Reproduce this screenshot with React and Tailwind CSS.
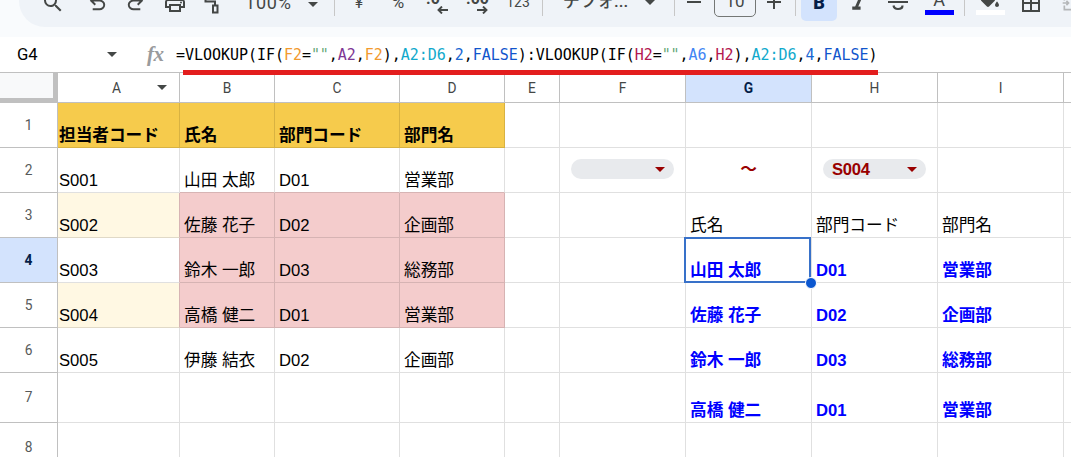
import clsx from "clsx";
import {
  MdSearch,
  MdOutlinePrint,
  MdFormatItalic,
  MdFormatColorFill,
} from "react-icons/md";

const columns = [
  { name: "A", width: "w-[122px]" },
  { name: "B", width: "w-[95px]" },
  { name: "C", width: "w-[125px]" },
  { name: "D", width: "w-[105px]" },
  { name: "E", width: "w-[55px]" },
  { name: "F", width: "w-[126px]" },
  { name: "G", width: "w-[126px]" },
  { name: "H", width: "w-[126px]" },
  { name: "I", width: "w-[126px]" },
  { name: "", width: "w-[126px]" },
];

const rows = [
  { id: 1, height: "h-[45px]", cells: { A: "担当者コード", B: "氏名", C: "部門コード", D: "部門名" } },
  { id: 2, height: "h-[45px]", cells: { A: "S001", B: "山田 太郎", C: "D01", D: "営業部" } },
  {
    id: 3,
    height: "h-[45px]",
    cells: { A: "S002", B: "佐藤 花子", C: "D02", D: "企画部", G: "氏名", H: "部門コード", I: "部門名" },
  },
  {
    id: 4,
    height: "h-[45px]",
    cells: { A: "S003", B: "鈴木 一郎", C: "D03", D: "総務部", G: "山田 太郎", H: "D01", I: "営業部" },
  },
  {
    id: 5,
    height: "h-[45px]",
    cells: { A: "S004", B: "高橋 健二", C: "D01", D: "営業部", G: "佐藤 花子", H: "D02", I: "企画部" },
  },
  {
    id: 6,
    height: "h-[45px]",
    cells: { A: "S005", B: "伊藤 結衣", C: "D02", D: "企画部", G: "鈴木 一郎", H: "D03", I: "総務部" },
  },
  { id: 7, height: "h-[50px]", cells: { G: "高橋 健二", H: "D01", I: "営業部" } },
  { id: 8, height: "h-[50px]", cells: {} },
];

const formula = [
  ["=VLOOKUP(IF(", "text-black"],
  ["F2", "text-[#f29a2e]"],
  ["=", "text-black"],
  ['""', "text-[#188038]/70"],
  [",", "text-black"],
  ["A2", "text-[#7e3794]"],
  [",", "text-black"],
  ["F2", "text-[#f29a2e]"],
  ["),", "text-black"],
  ["A2:D6", "text-[#11a9cc]"],
  [",", "text-black"],
  ["2", "text-[#1967d2]"],
  [",", "text-black"],
  ["FALSE", "text-[#1155cc]"],
  ["):VLOOKUP(IF(", "text-black"],
  ["H2", "text-[#b3174f]"],
  ["=", "text-black"],
  ['""', "text-[#188038]/70"],
  [",", "text-black"],
  ["A6", "text-[#4285f4]"],
  [",", "text-black"],
  ["H2", "text-[#b3174f]"],
  ["),", "text-black"],
  ["A2:D6", "text-[#11a9cc]"],
  [",", "text-black"],
  ["4", "text-[#1967d2]"],
  [",", "text-black"],
  ["FALSE", "text-[#1155cc]"],
  [")", "text-black"],
];

const Caret = ({ className }) => (
  <svg viewBox="0 0 10 5" className={clsx("h-[5px] w-[10px] shrink-0", className)}>
    <path d="M0 0h10L5 5z" fill="currentColor" />
  </svg>
);

const Divider = ({ className }) => <div className={clsx("h-[25px] w-px shrink-0 bg-[#c7c7c7]", className)} />;

const Tool = ({ className, children }) => (
  <div className={clsx("flex h-[36px] w-[36px] shrink-0 items-center justify-center rounded-[5px]", className)}>
    {children}
  </div>
);

const UndoIcon = ({ className }) => (
  <svg viewBox="0 -960 960 960" fill="currentColor" className={clsx("size-[23px]", className)}>
    <path d="M280-200v-80h284q63 0 109.5-40T720-420q0-60-46.5-100T564-560H312l104 104-56 56-200-200 200-200 56 56-104 104h252q97 0 169.5 63T800-420q0 94-72.5 157T564-200H280Z" />
  </svg>
);

const PaintIcon = () => (
  <svg viewBox="0 0 24 24" fill="none" stroke="currentColor" strokeWidth="2" className="size-[24px]">
    <path d="M6 2h11v5H6zM6 4.500H4.500V10.500H14V14" />
    <path d="M12 14.500h4.500v7H12z" />
  </svg>
);

const StrikeIcon = () => (
  <svg viewBox="0 0 24 24" fill="none" stroke="currentColor" strokeWidth="2.200" className="mb-[2px] size-[24px]">
    <path d="M2 12h20M16.500 8C16 5.500 14.500 4.500 12 4.500S7.500 6 7.500 8.500M7.500 15.500c.5 2.500 2 3.500 4.500 3.500s4.500-1.200 4.500-3.500" />
  </svg>
);

const BordersIcon = () => (
  <svg viewBox="0 0 18 18" fill="none" stroke="currentColor" strokeWidth="2" className="size-[18px]">
    <path d="M1 1h16v16H1zM9 1v16M1 9h16" />
  </svg>
);

// Decimal place buttons: digits with an arrow tucked below them
const DecimalIcon = ({ digits, right }) => (
  <div className="relative mb-[4px] h-[26px] w-[22px] text-[16px] leading-[18px] font-bold">
    <span className="absolute top-[2px] left-0">{digits}</span>
    <svg
      viewBox="0 0 11 8"
      fill="none"
      stroke="currentColor"
      strokeWidth="1.9"
      className={clsx("absolute right-0 bottom-0 h-[8px] w-[11px]", right && "rotate-180")}
    >
      <path d="M11 4H1.500M5 .5 1.500 4 5 7.500" />
    </svg>
  </div>
);

const Toolbar = () => (
  <div className="flex h-[37px] flex-col bg-[#f9fbfd] pl-[19px]">
    <div className="flex h-[27px] flex-col justify-end overflow-hidden rounded-bl-[26px] bg-[#eff3f8]">
      <div className="flex h-[48px] shrink-0 items-center pl-[16px] font-['Roboto','Noto_Sans_CJK_JP',sans-serif] text-[#444746]">
        <Tool><MdSearch className="size-[24px]" /></Tool>
        <Tool className="ml-[8px]"><UndoIcon /></Tool>
        <Tool className="ml-[2px]"><UndoIcon className="-scale-x-100" /></Tool>
        <Tool className="ml-[4px]"><MdOutlinePrint className="size-[24px]" /></Tool>
        <Tool className="ml-[2px]"><PaintIcon /></Tool>
        <div className="-mt-[2px] ml-[14px] w-[48px] shrink-0 text-[18px] tracking-[0.8px]">100%</div>
        <Caret className="mt-[2px] ml-[15px]" />
        <Divider className="ml-[16px]" />
        <Tool className="ml-[6px] text-[16px]">¥</Tool>
        <Tool className="ml-[3px] text-[17px]">%</Tool>
        <Tool className="ml-[3px]"><DecimalIcon digits=".0" /></Tool>
        <Tool className="ml-[4px]"><DecimalIcon digits=".00" right /></Tool>
        <Tool className="-mt-[2px] ml-[5px] text-[14px]">123</Tool>
        <Divider className="ml-[6px]" />
        <div className="-mt-[2px] ml-[20px] w-[66px] shrink-0 text-[17px] font-medium whitespace-nowrap">デフォ...</div>
        <Caret className="-mt-[1px] ml-[16px]" />
        <Divider className="ml-[19px]" />
        <div className="-mt-[3px] mr-[3px] ml-[12px] h-[2px] w-[14px] shrink-0 bg-current" />
        <div className="-mt-[3px] ml-[10px] flex h-[30px] w-[42px] shrink-0 items-center justify-center rounded-[5px] border border-[#747775] text-[17px]">
          10
        </div>
        <div className="-mt-[3px] mr-[3px] ml-[11px] flex h-[14px] w-[14px] shrink-0 items-center">
          <svg viewBox="0 0 14 14" stroke="currentColor" strokeWidth="2" className="size-[14px]">
            <path d="M7 0v14M0 7h14" />
          </svg>
        </div>
        <Divider className="ml-[11px]" />
        <Tool className="ml-[5px] bg-[#d3e3fd] pb-[2px] text-[18px] font-black text-[#041e49]">B</Tool>
        <Tool className="ml-[3px]"><MdFormatItalic className="size-[25px]" /></Tool>
        <Tool className="ml-[4px]"><StrikeIcon /></Tool>
        <Tool className="ml-[5px] flex-col pb-[2px]">
          <span className="text-[18px] leading-[20px]">A</span>
          <span className="h-[5px] w-[29px] bg-[#0000ff]" />
        </Tool>
        <Divider className="ml-[7px]" />
        <Tool className="ml-[7px] flex-col pb-[2px]">
          <MdFormatColorFill className="-mb-[4px] size-[24px]" />
          <span className="h-[5px] w-[29px] bg-white" />
        </Tool>
        <Tool className="ml-[5px] pb-px"><BordersIcon /></Tool>
        <Tool className="ml-[4px] text-[#b4b6b8]">
          <svg viewBox="0 0 24 24" fill="none" stroke="currentColor" strokeWidth="2" className="size-[20px]">
            <path d="M4 9V4h16v5M4 15v5h16v-5M2 12h7M6.500 9.500 9 12l-2.500 2.500M22 12h-7" />
          </svg>
        </Tool>
      </div>
    </div>
  </div>
);

const FormulaBar = () => (
  <div className="relative flex h-[36px] items-center border-b border-[#c0c0c0] bg-white">
    <div className="w-[107px] pl-[17px] font-['Roboto',sans-serif] text-[16.67px] text-black">G4</div>
    <Caret className="text-[#444746]" />
    <div className="ml-[30px] w-[29px] pb-[2px] font-['Liberation_Serif',serif] text-[21px] leading-[22px] font-bold tracking-[-0.5px] text-[#999b9d] italic">
      fx
    </div>
    <div className="pt-[2px] font-['DejaVu_Sans_Mono',monospace] text-[15px] tracking-[-0.04px] whitespace-pre">
      {formula.map(([text, color], i) => (
        <span key={i} className={color}>{text}</span>
      ))}
    </div>
    {/* marker line under the formula */}
    <div className="absolute top-[33px] left-[183px] z-10 h-[5px] w-[695px] bg-[#e31e1e]" />
  </div>
);

const Chip = ({ value }) => (
  <div className="ml-[11px] flex h-[20px] w-[103px] items-center justify-between rounded-full bg-[#e8eaed] pr-[9px] pl-[9px] font-bold tracking-[-0.3px] text-[#990000]">
    <span className="pt-[2px]">{value}</span>
    <Caret />
  </div>
);

const cellStyle = (col, row) => {
  const inTable = ["A", "B", "C", "D"].includes(col);
  const inRange = ["B", "C", "D"].includes(col);
  const isResult = ["G", "H", "I"].includes(col) && row >= 4;
  return clsx(
    col === "A" ? "pl-px" : "pl-[4px]",
    inTable && row === 1 && "bg-[#f6cb4c] font-bold",
    inRange && row >= 3 && row <= 5 && "bg-[#f4cccc]",
    inRange && row === 2 && "border-b-[#d7b4b4]",
    col === "A" && row >= 3 && row <= 5 && "border-r-[#d7b4b4]",
    col === "A" && (row === 3 || row === 5) && "bg-[#fff8e3]",
    isResult ? "font-bold text-[#0000ff]" : "text-black"
  );
};

const Cell = ({ column, row }) => {
  const col = column.name;
  const base = clsx("flex shrink-0 border-r border-b border-black/12 whitespace-nowrap", column.width);

  if (row.id === 2 && (col === "F" || col === "H")) {
    return (
      <div className={clsx(base, "items-center pb-[2px]")}>
        <Chip value={col === "H" ? "S004" : ""} />
      </div>
    );
  }
  if (row.id === 2 && col === "G") {
    return <div className={clsx(base, "items-center justify-center font-bold text-[#990000]")}>～</div>;
  }
  return (
    <div className={clsx(base, "relative items-end pb-px", cellStyle(col, row.id))}>
      {row.cells[col]}
      {row.id === 4 && col === "G" && (
        <>
          <div className="absolute -top-px -left-[2px] z-10 h-[46px] w-[127px] border-2 border-[#3871c9]" />
          <div className="absolute top-[39px] left-[119px] z-20 size-[12px] rounded-full border border-white bg-[#0b57d0]" />
        </>
      )}
    </div>
  );
};

const Sheet = () => (
  <div className="flex flex-col font-['Liberation_Sans','Noto_Sans_CJK_JP',sans-serif] text-[16.67px] leading-[20px]">
    <div className="flex h-[30px] shrink-0 font-['Roboto',sans-serif] text-[13.75px] text-[#444746]">
      <div className="w-[58px] shrink-0 border-r-[5px] border-b-[5px] border-[#c0c0c0] bg-[#f8f9fa]" />
      {columns.map((column) => (
        <div
          key={column.name}
          className={clsx(
            "flex shrink-0 items-center border-r border-b border-[#c0c0c0]",
            column.width,
            column.name === "A" ? "justify-end pr-[12px]" : "justify-center",
            column.name === "G" && "bg-[#d3e3fd] font-bold text-[#041e49]"
          )}
        >
          {column.name}
          {column.name === "A" && <Caret className="ml-[36px]" />}
        </div>
      ))}
    </div>
    {rows.map((row) => (
      <div key={row.id} className={clsx("flex shrink-0", row.height)}>
        <div
          className={clsx(
            "flex w-[58px] shrink-0 items-center justify-center border-r border-b border-[#c0c0c0] pb-px font-['Roboto',sans-serif] text-[13.75px]",
            row.id === 4 ? "bg-[#d3e3fd] font-bold text-[#041e49]" : "text-[#575a5a]"
          )}
        >
          {row.id}
        </div>
        {columns.map((column) => (
          <Cell key={column.name} column={column} row={row} />
        ))}
      </div>
    ))}
  </div>
);

const App = () => {
  return (
    <div className="h-[457px] w-[1071px] overflow-hidden bg-white">
      <Toolbar />
      <FormulaBar />
      <Sheet />
    </div>
  );
};

export default App;
